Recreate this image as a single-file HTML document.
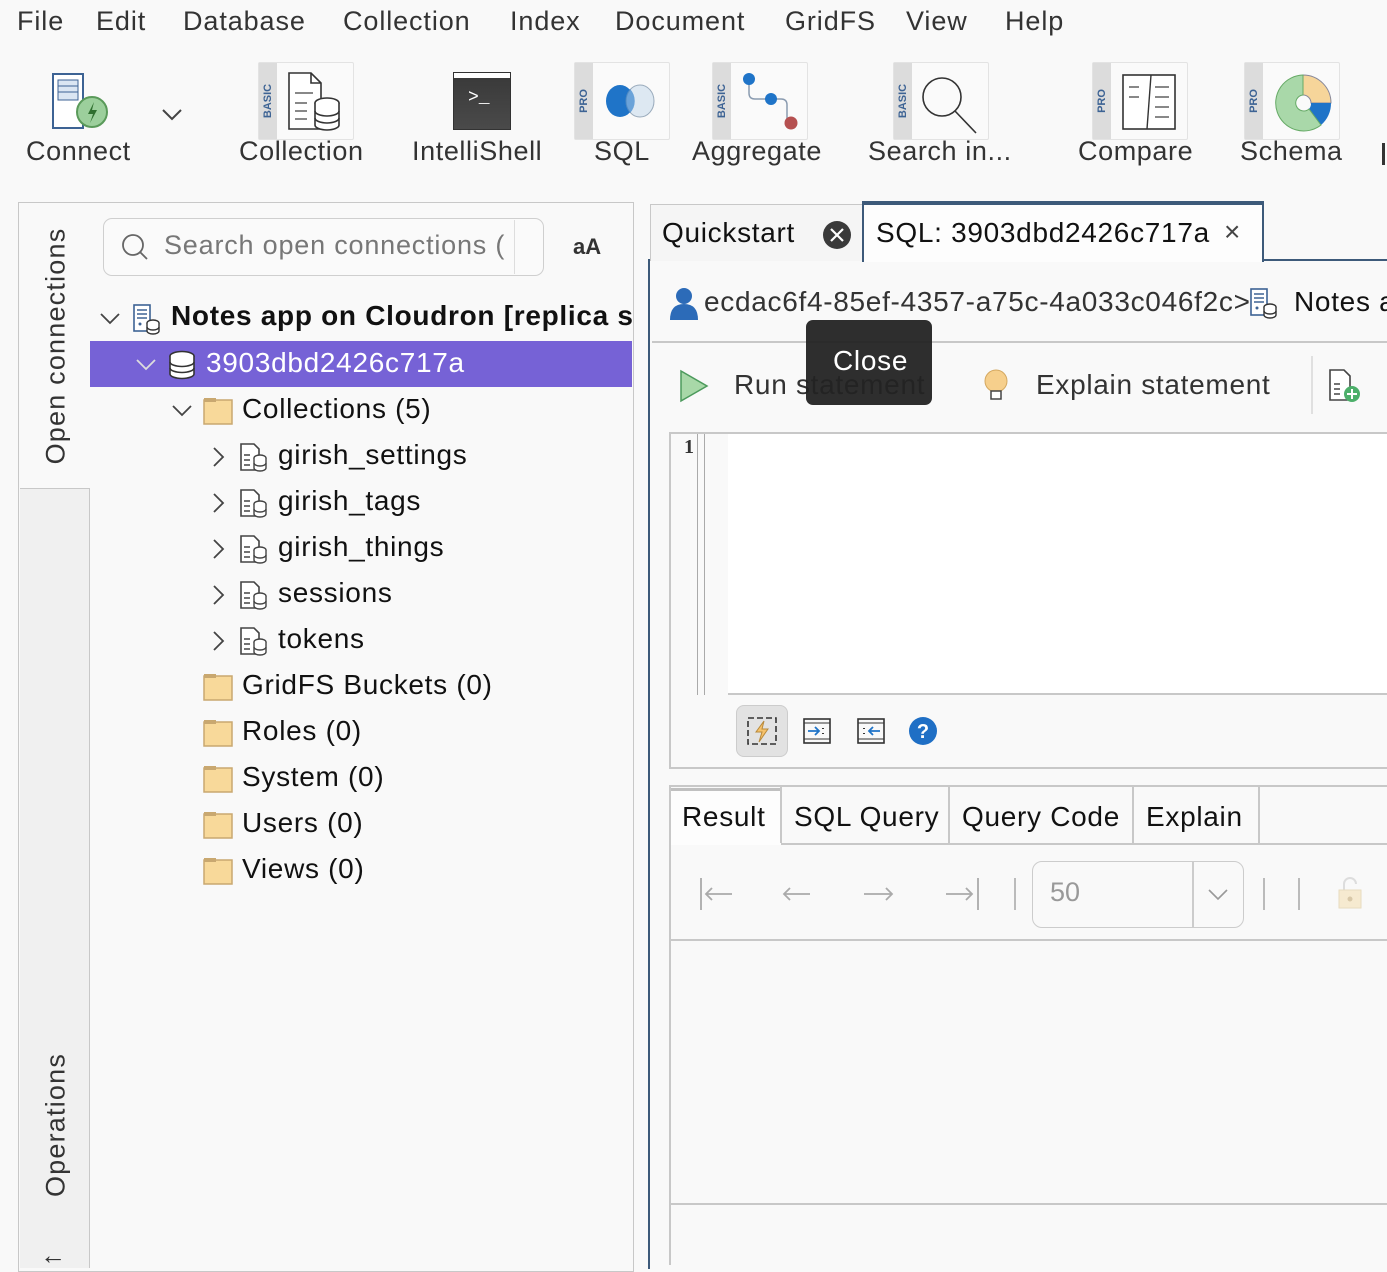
<!DOCTYPE html>
<html><head><meta charset="utf-8">
<style>
*{margin:0;padding:0;box-sizing:border-box}
body{width:1387px;height:1264px;overflow:hidden;background:#f9f9f9;font-family:"Liberation Sans",sans-serif;color:#222;position:relative}
.a{position:absolute;white-space:nowrap}
.m{font-size:27px;color:#333;top:6px;letter-spacing:0.9px}
.tl{font-size:27px;color:#333;top:136px;letter-spacing:0.6px}
.t{font-size:28px;color:#111;letter-spacing:0.7px}
.badge{position:absolute;left:0;top:0;width:18px;height:100%;background:#dcdcdc;}
.badge span{position:absolute;left:50%;top:50%;transform:translate(-50%,-50%) rotate(-90deg);font-size:11px;font-weight:bold;color:#3d6394}
.tb{position:absolute;top:62px;height:78px;border:1px solid #e3e3e3;background:#fafafa;border-radius:2px}
</style></head><body>

<!-- menu -->
<div class="a m" style="left:17px">File</div>
<div class="a m" style="left:96px">Edit</div>
<div class="a m" style="left:183px">Database</div>
<div class="a m" style="left:343px">Collection</div>
<div class="a m" style="left:510px">Index</div>
<div class="a m" style="left:615px">Document</div>
<div class="a m" style="left:785px">GridFS</div>
<div class="a m" style="left:906px">View</div>
<div class="a m" style="left:1005px">Help</div>

<!-- toolbar -->
<svg class="a" style="left:50px;top:72px" width="60" height="60" viewBox="0 0 60 60">
<rect x="3" y="2" width="30" height="54" fill="#fff" stroke="#3d6394" stroke-width="2"/>
<rect x="8" y="8" width="20" height="20" fill="#dbe6f3" stroke="#3d6394"/>
<line x1="8" y1="14" x2="28" y2="14" stroke="#3d6394"/><line x1="8" y1="20" x2="28" y2="20" stroke="#3d6394"/>
<circle cx="42" cy="40" r="15" fill="#9ccf9c" stroke="#5a9a5a" stroke-width="2"/>
<path d="M44 30 L38 42 H43 L40 51 L47 38 H42 Z" fill="#2f6f2f"/></svg>
<svg class="a" style="left:160px;top:106px" width="24" height="16"><path d="M3 4 L12 13 L21 4" fill="none" stroke="#444" stroke-width="2"/></svg>
<div class="a tl" style="left:26px">Connect</div>

<div class="tb" style="left:258px;width:96px"><div class="badge"><span>BASIC</span></div>
<svg class="a" style="left:26px;top:8px" width="62" height="62" viewBox="0 0 62 62"><path d="M4 2 H26 L36 12 V58 H4 Z" fill="#fff" stroke="#333" stroke-width="1.6"/><path d="M26 2 V12 H36" fill="none" stroke="#333" stroke-width="1.6"/><line x1="10" y1="22" x2="28" y2="22" stroke="#888" stroke-width="2"/><line x1="10" y1="32" x2="22" y2="32" stroke="#888" stroke-width="2"/><line x1="10" y1="40" x2="22" y2="40" stroke="#888" stroke-width="2"/><line x1="10" y1="48" x2="22" y2="48" stroke="#888" stroke-width="2"/><ellipse cx="42" cy="32" rx="12" ry="5" fill="#fff" stroke="#333" stroke-width="1.6"/><path d="M30 32 V54 A12 5 0 0 0 54 54 V32" fill="#fff" stroke="#333" stroke-width="1.6"/><path d="M30 40 A12 5 0 0 0 54 40 M30 47 A12 5 0 0 0 54 47" fill="none" stroke="#333" stroke-width="1.6"/></svg></div>
<div class="a tl" style="left:239px">Collection</div>

<div class="a" style="left:454px;top:73px;width:56px;height:56px;background:linear-gradient(#3a3a3a,#4a4a4a);border-top:5px solid #fff;outline:1px solid #333"></div>
<div class="a" style="left:468px;top:88px;color:#fff;font-size:18px;font-family:'Liberation Mono',monospace">&gt;_</div>
<div class="a tl" style="left:412px">IntelliShell</div>

<div class="tb" style="left:574px;width:96px"><div class="badge"><span>PRO</span></div>
<svg class="a" style="left:26px;top:18px" width="62" height="40"><ellipse cx="19" cy="20" rx="14" ry="16" fill="#1f74c8"/><ellipse cx="39" cy="20" rx="14" ry="16" fill="#dde8f2" stroke="#9ab" stroke-width="1"/><path d="M29 8 A14 16 0 0 1 29 32 A14 16 0 0 1 29 8" fill="#1f74c8" opacity=".6"/></svg></div>
<div class="a tl" style="left:594px">SQL</div>

<div class="tb" style="left:712px;width:96px"><div class="badge"><span>BASIC</span></div>
<svg class="a" style="left:24px;top:6px" width="66" height="66"><path d="M12 10 V24 Q12 30 18 30 H32 M38 30 H44 Q50 30 50 36 V52" fill="none" stroke="#8a9bb0" stroke-width="1.5"/><circle cx="12" cy="10" r="6" fill="#1f74c8"/><circle cx="34" cy="30" r="6" fill="#1f74c8"/><circle cx="54" cy="54" r="6.5" fill="#b55050"/></svg></div>
<div class="a tl" style="left:692px">Aggregate</div>

<div class="tb" style="left:893px;width:96px"><div class="badge"><span>BASIC</span></div>
<svg class="a" style="left:24px;top:8px" width="66" height="66"><circle cx="24" cy="26" r="19" fill="none" stroke="#333" stroke-width="1.6"/><line x1="37" y1="40" x2="58" y2="62" stroke="#333" stroke-width="1.6"/></svg></div>
<div class="a tl" style="left:868px">Search in...</div>

<div class="tb" style="left:1092px;width:96px"><div class="badge"><span>PRO</span></div>
<svg class="a" style="left:26px;top:10px" width="60" height="60"><rect x="4" y="2" width="52" height="54" fill="#fff" stroke="#333" stroke-width="1.6"/><line x1="32" y1="2" x2="28" y2="56" stroke="#333" stroke-width="1.4"/><g stroke="#888" stroke-width="2"><line x1="10" y1="14" x2="20" y2="14"/><line x1="10" y1="24" x2="20" y2="24"/><line x1="36" y1="14" x2="50" y2="14"/><line x1="36" y1="24" x2="50" y2="24"/><line x1="36" y1="34" x2="50" y2="34"/><line x1="36" y1="44" x2="50" y2="44"/></g></svg></div>
<div class="a tl" style="left:1078px">Compare</div>

<div class="tb" style="left:1244px;width:96px"><div class="badge"><span>PRO</span></div>
<svg class="a" style="left:26px;top:8px" width="64" height="64"><path d="M32 4 A28 28 0 0 1 60 32 H40 A8 8 0 0 0 32 24 Z" fill="#f6d59a" stroke="#889" stroke-width="1"/><path d="M60 32 A28 28 0 0 1 50 54 L38 38 A8 8 0 0 0 40 32 Z" fill="#1f74c8"/><path d="M50 54 A28 28 0 1 1 32 4 V24 A8 8 0 1 0 38 38 Z" fill="#a9d8a9" stroke="#6a6" stroke-width="1"/></svg></div>
<div class="a tl" style="left:1240px">Schema</div>
<div class="a" style="left:1382px;top:143px;width:3px;height:22px;background:#333"></div>

<!-- left panel -->
<div class="a" style="left:18px;top:202px;width:616px;height:1070px;border:1.5px solid #c8c8c8"></div>
<div class="a" style="left:20px;top:488px;width:70px;height:780px;background:#f0f0f0;border-top:1.5px solid #c8c8c8;border-right:1.5px solid #c8c8c8"></div>
<div class="a" style="left:56px;top:346px;transform:translate(-50%,-50%) rotate(-90deg);font-size:27px;color:#333;letter-spacing:1.2px">Open connections</div>
<div class="a" style="left:56px;top:1125px;transform:translate(-50%,-50%) rotate(-90deg);font-size:27px;color:#333;letter-spacing:1.2px">Operations</div>
<div class="a" style="left:40px;top:1240px;font-size:26px;color:#333">←</div>

<div class="a" style="left:103px;top:218px;width:441px;height:58px;border:1.5px solid #cfcfcf;border-radius:9px;background:#fafafa"></div>
<div class="a" style="left:514px;top:220px;width:1px;height:54px;background:#ddd"></div>
<svg class="a" style="left:120px;top:232px" width="32" height="32"><circle cx="13" cy="13" r="10" fill="none" stroke="#666" stroke-width="1.8"/><line x1="20" y1="20" x2="27" y2="27" stroke="#666" stroke-width="1.8"/></svg>
<div class="a" style="left:164px;top:230px;width:348px;overflow:hidden;font-size:27px;color:#777;letter-spacing:0.8px">Search open connections (</div>
<div class="a" style="left:573px;top:234px;font-size:22px;font-weight:bold;color:#333">aA</div>

<svg width="0" height="0" style="position:absolute"><defs><g id="ci"><path d="M2 2 H15 L20 7 V28 H2 Z" fill="#fff" stroke="#444" stroke-width="1.6"/><line x1="5" y1="13" x2="11" y2="13" stroke="#444" stroke-width="1.5"/><line x1="5" y1="18" x2="11" y2="18" stroke="#444" stroke-width="1.5"/><line x1="5" y1="23" x2="11" y2="23" stroke="#444" stroke-width="1.5"/><ellipse cx="21" cy="16" rx="6" ry="3" fill="#fff" stroke="#444" stroke-width="1.4"/><path d="M15 16 V26 A6 3 0 0 0 27 26 V16" fill="#fff" stroke="#444" stroke-width="1.4"/><path d="M15 21 A6 3 0 0 0 27 21" fill="none" stroke="#444" stroke-width="1.4"/></g><g id="fo"><rect x="1" y="4" width="28" height="24" fill="#f8d99a" stroke="#c9a870" stroke-width="1.5"/><rect x="1" y="2" width="12" height="4" fill="#c9a870"/></g><g id="srv"><rect x="2" y="2" width="16" height="26" fill="#fff" stroke="#3d6394" stroke-width="1.6"/><line x1="5" y1="7" x2="15" y2="7" stroke="#3d6394" stroke-width="1.5"/><line x1="5" y1="11" x2="15" y2="11" stroke="#3d6394" stroke-width="1.5"/><line x1="5" y1="15" x2="15" y2="15" stroke="#3d6394" stroke-width="1.5"/><circle cx="8" cy="21" r="1.5" fill="#3d6394"/><ellipse cx="21" cy="20" rx="6" ry="3" fill="#fff" stroke="#333" stroke-width="1.4"/><path d="M15 20 V28 A6 3 0 0 0 27 28 V20" fill="#fff" stroke="#333" stroke-width="1.4"/><path d="M15 24 A6 3 0 0 0 27 24" fill="none" stroke="#333" stroke-width="1.4"/></g></defs></svg>

<!-- tree -->
<svg class="a" style="left:98px;top:309px" width="24" height="20"><path d="M3 5 L12 14 L21 5" fill="none" stroke="#444" stroke-width="1.8"/></svg>
<svg class="a" style="left:132px;top:303px" width="30" height="32"><use href="#srv"/></svg>
<div class="a t" style="left:171px;top:300px;width:461px;overflow:hidden;font-weight:bold">Notes app on Cloudron [replica set]</div>

<div class="a" style="left:90px;top:341px;width:542px;height:46px;background:#7662d6"></div>
<svg class="a" style="left:134px;top:355px" width="24" height="20"><path d="M3 5 L12 14 L21 5" fill="none" stroke="#ddd" stroke-width="1.8"/></svg>
<svg class="a" style="left:167px;top:350px" width="30" height="30"><ellipse cx="15" cy="6" rx="12" ry="4.5" fill="#fff" stroke="#333" stroke-width="1.6"/><path d="M3 6 V24 A12 4.5 0 0 0 27 24 V6" fill="#fff" stroke="#333" stroke-width="1.6"/><path d="M3 12 A12 4.5 0 0 0 27 12 M3 18 A12 4.5 0 0 0 27 18" fill="none" stroke="#333" stroke-width="1.6"/></svg>
<div class="a t" style="left:206px;top:347px;color:#fff">3903dbd2426c717a</div>

<svg class="a" style="left:170px;top:401px" width="24" height="20"><path d="M3 5 L12 14 L21 5" fill="none" stroke="#444" stroke-width="1.8"/></svg>
<svg class="a" style="left:203px;top:396px" width="30" height="30"><use href="#fo"/></svg>
<div class="a t" style="left:242px;top:393px">Collections (5)</div>

<svg class="a" style="left:208px;top:445px" width="20" height="24"><path d="M6 3 L15 12 L6 21" fill="none" stroke="#444" stroke-width="1.8"/></svg>
<svg class="a" style="left:208px;top:491px" width="20" height="24"><path d="M6 3 L15 12 L6 21" fill="none" stroke="#444" stroke-width="1.8"/></svg>
<svg class="a" style="left:208px;top:537px" width="20" height="24"><path d="M6 3 L15 12 L6 21" fill="none" stroke="#444" stroke-width="1.8"/></svg>
<svg class="a" style="left:208px;top:583px" width="20" height="24"><path d="M6 3 L15 12 L6 21" fill="none" stroke="#444" stroke-width="1.8"/></svg>
<svg class="a" style="left:208px;top:629px" width="20" height="24"><path d="M6 3 L15 12 L6 21" fill="none" stroke="#444" stroke-width="1.8"/></svg>
<svg class="a" style="left:239px;top:442px" width="30" height="32"><use href="#ci"/></svg>
<svg class="a" style="left:239px;top:488px" width="30" height="32"><use href="#ci"/></svg>
<svg class="a" style="left:239px;top:534px" width="30" height="32"><use href="#ci"/></svg>
<svg class="a" style="left:239px;top:580px" width="30" height="32"><use href="#ci"/></svg>
<svg class="a" style="left:239px;top:626px" width="30" height="32"><use href="#ci"/></svg>
<div class="a t" style="left:278px;top:439px">girish_settings</div>
<div class="a t" style="left:278px;top:485px">girish_tags</div>
<div class="a t" style="left:278px;top:531px">girish_things</div>
<div class="a t" style="left:278px;top:577px">sessions</div>
<div class="a t" style="left:278px;top:623px">tokens</div>

<svg class="a" style="left:203px;top:672px" width="30" height="30"><use href="#fo"/></svg>
<svg class="a" style="left:203px;top:718px" width="30" height="30"><use href="#fo"/></svg>
<svg class="a" style="left:203px;top:764px" width="30" height="30"><use href="#fo"/></svg>
<svg class="a" style="left:203px;top:810px" width="30" height="30"><use href="#fo"/></svg>
<svg class="a" style="left:203px;top:856px" width="30" height="30"><use href="#fo"/></svg>
<div class="a t" style="left:242px;top:669px">GridFS Buckets (0)</div>
<div class="a t" style="left:242px;top:715px">Roles (0)</div>
<div class="a t" style="left:242px;top:761px">System (0)</div>
<div class="a t" style="left:242px;top:807px">Users (0)</div>
<div class="a t" style="left:242px;top:853px">Views (0)</div>

<!-- right panel -->
<div class="a" style="left:648px;top:259px;width:760px;height:1010px;border-left:2px solid #3d5a7a;border-top:2px solid #3d5a7a"></div>
<div class="a" style="left:650px;top:204px;width:213px;height:57px;border:1.5px solid #c8c8c8;border-bottom:none;background:#f5f5f5"></div>
<div class="a t" style="left:662px;top:217px">Quickstart</div>
<svg class="a" style="left:821px;top:219px" width="32" height="32"><circle cx="16" cy="16" r="14" fill="#3a3a3a"/><path d="M10 10 L22 22 M22 10 L10 22" stroke="#fff" stroke-width="2.2"/></svg>
<div class="a" style="left:862px;top:201px;width:402px;height:61px;border:2px solid #3d5a7a;border-top-width:4px;border-bottom:none;background:#fdfdfd"></div>
<div class="a t" style="left:876px;top:217px">SQL: 3903dbd2426c717a</div>
<div class="a" style="left:1224px;top:216px;font-size:28px;color:#444">×</div>

<svg class="a" style="left:668px;top:286px" width="32" height="36"><circle cx="16" cy="10" r="8" fill="#2c6bb8"/><path d="M2 34 Q2 18 16 18 Q30 18 30 34 Z" fill="#2c6bb8"/></svg>
<div class="a t" style="left:704px;top:286px;color:#333">ecdac6f4-85ef-4357-a75c-4a033c046f2c&gt;</div>
<svg class="a" style="left:1249px;top:287px" width="30" height="32"><use href="#srv"/></svg>
<div class="a t" style="left:1294px;top:286px">Notes app</div>
<div class="a" style="left:652px;top:341px;width:740px;height:2px;background:#c8c8c8"></div>

<svg class="a" style="left:678px;top:368px" width="32" height="36"><path d="M3 3 L29 18 L3 33 Z" fill="#a8d8a8" stroke="#4c9a5c" stroke-width="1.5"/></svg>
<div class="a t" style="left:734px;top:369px;color:#333">Run statement</div>
<svg class="a" style="left:982px;top:368px" width="28" height="36"><circle cx="14" cy="13" r="11" fill="#f6cf8c" stroke="#d4a860"/><rect x="9" y="23" width="10" height="8" fill="#fff" stroke="#444" stroke-width="1.5"/></svg>
<div class="a t" style="left:1036px;top:369px;color:#333">Explain statement</div>
<div class="a" style="left:1311px;top:356px;width:2px;height:58px;background:#e0e0e0"></div>
<svg class="a" style="left:1328px;top:368px" width="36" height="36"><path d="M2 2 H16 L22 8 V32 H2 Z" fill="#fff" stroke="#444" stroke-width="1.6"/><line x1="6" y1="16" x2="12" y2="16" stroke="#444" stroke-width="1.5"/><line x1="6" y1="21" x2="12" y2="21" stroke="#444" stroke-width="1.5"/><line x1="6" y1="26" x2="12" y2="26" stroke="#444" stroke-width="1.5"/><circle cx="24" cy="26" r="8" fill="#4caf6a"/><path d="M24 21 V31 M19 26 H29" stroke="#fff" stroke-width="2"/></svg>

<!-- tooltip -->
<div class="a" style="left:806px;top:320px;width:126px;height:85px;background:rgba(35,35,35,.95);border-radius:7px"></div>
<div class="a" style="left:833px;top:345px;color:#fff;font-size:28px;letter-spacing:0.7px">Close</div>

<!-- editor -->
<div class="a" style="left:669px;top:432px;width:730px;height:337px;border:2px solid #c8c8c8;background:#f9f9f9"></div>
<div class="a" style="left:728px;top:434px;width:670px;height:261px;background:#fff;border-bottom:2px solid #c8c8c8"></div>
<div class="a" style="left:697px;top:434px;width:1px;height:261px;background:#aaa"></div>
<div class="a" style="left:704px;top:434px;width:1px;height:261px;background:#aaa"></div>
<div class="a" style="left:684px;top:436px;font-size:20px;font-weight:bold;color:#333;font-family:'Liberation Serif',serif">1</div>
<div class="a" style="left:736px;top:705px;width:52px;height:52px;background:#e2e2e2;border:1.5px solid #ccc;border-radius:8px"></div>
<svg class="a" style="left:746px;top:716px" width="32" height="30"><rect x="2" y="2" width="28" height="26" fill="none" stroke="#333" stroke-width="1.6" stroke-dasharray="6 3"/><path d="M18 5 L10 16 H16 L13 26 L22 13 H16 Z" fill="#f6c26b" stroke="#b8893a" stroke-width="1"/></svg>
<svg class="a" style="left:802px;top:716px" width="30" height="30"><rect x="2" y="3" width="26" height="24" fill="none" stroke="#333" stroke-width="1.6"/><line x1="2" y1="7" x2="28" y2="7" stroke="#333"/><line x1="2" y1="23" x2="28" y2="23" stroke="#333"/><path d="M6 15 H17 M13 11 L17 15 L13 19" fill="none" stroke="#1f74c8" stroke-width="1.8"/><path d="M21 12 v1 M21 17 v1" stroke="#333" stroke-width="2"/></svg>
<svg class="a" style="left:856px;top:716px" width="30" height="30"><rect x="2" y="3" width="26" height="24" fill="none" stroke="#333" stroke-width="1.6"/><line x1="2" y1="7" x2="28" y2="7" stroke="#333"/><line x1="2" y1="23" x2="28" y2="23" stroke="#333"/><path d="M24 15 H13 M17 11 L13 15 L17 19" fill="none" stroke="#1f74c8" stroke-width="1.8"/><path d="M8 12 v1 M8 17 v1" stroke="#333" stroke-width="2"/></svg>
<svg class="a" style="left:908px;top:716px" width="30" height="30"><circle cx="15" cy="15" r="14" fill="#1f6fc5"/><text x="15" y="22" text-anchor="middle" fill="#fff" font-size="20" font-weight="bold" font-family="Liberation Sans">?</text></svg>

<!-- result tabs -->
<div class="a" style="left:669px;top:785px;width:730px;height:2px;background:#c8c8c8"></div>
<div class="a" style="left:669px;top:843px;width:730px;height:2px;background:#c8c8c8"></div>
<div class="a" style="left:669px;top:785px;width:730px;height:480px;border-left:2px solid #c8c8c8"></div>
<div class="a" style="left:671px;top:788px;width:110px;height:57px;background:#fdfdfd;border-top:3px solid #c0c0c0"></div>
<div class="a" style="left:780px;top:787px;width:1.5px;height:56px;background:#c8c8c8"></div>
<div class="a" style="left:948px;top:787px;width:1.5px;height:56px;background:#c8c8c8"></div>
<div class="a" style="left:1132px;top:787px;width:1.5px;height:56px;background:#c8c8c8"></div>
<div class="a" style="left:1258px;top:787px;width:1.5px;height:56px;background:#c8c8c8"></div>
<div class="a t" style="left:682px;top:801px">Result</div>
<div class="a t" style="left:794px;top:801px">SQL Query</div>
<div class="a t" style="left:962px;top:801px">Query Code</div>
<div class="a t" style="left:1146px;top:801px">Explain</div>

<svg class="a" style="left:698px;top:876px" width="300" height="36"><g fill="none" stroke="#aaa" stroke-width="1.8"><path d="M3 2 V34 M8 18 H34 M14 12 L8 18 L14 24"/><path d="M86 18 H112 M92 12 L86 18 L92 24"/><path d="M166 18 H194 M188 12 L194 18 L188 24"/><path d="M248 18 H274 M268 12 L274 18 L268 24 M280 2 V34"/></g></svg>
<div class="a" style="left:1014px;top:878px;width:1.5px;height:32px;background:#bbb"></div>
<div class="a" style="left:1032px;top:861px;width:212px;height:67px;border:1.5px solid #ccc;border-radius:10px"></div>
<div class="a" style="left:1192px;top:862px;width:1.5px;height:65px;background:#ccc"></div>
<div class="a" style="left:1050px;top:877px;font-size:27px;color:#999">50</div>
<svg class="a" style="left:1206px;top:885px" width="24" height="20"><path d="M3 5 L12 14 L21 5" fill="none" stroke="#999" stroke-width="1.6"/></svg>
<div class="a" style="left:1263px;top:878px;width:1.5px;height:32px;background:#bbb"></div>
<div class="a" style="left:1298px;top:878px;width:1.5px;height:32px;background:#bbb"></div>
<svg class="a" style="left:1336px;top:876px" width="28" height="34"><path d="M8 14 V8 A6 6 0 0 1 20 8" fill="none" stroke="#ddd" stroke-width="2"/><rect x="3" y="14" width="22" height="18" fill="#f6ead0" stroke="#e8dcc0"/><circle cx="14" cy="23" r="2.5" fill="#d8c8a8"/></svg>
<div class="a" style="left:671px;top:939px;width:720px;height:2px;background:#c8c8c8"></div>
<div class="a" style="left:671px;top:1203px;width:720px;height:2px;background:#c8c8c8"></div>

</body></html>
